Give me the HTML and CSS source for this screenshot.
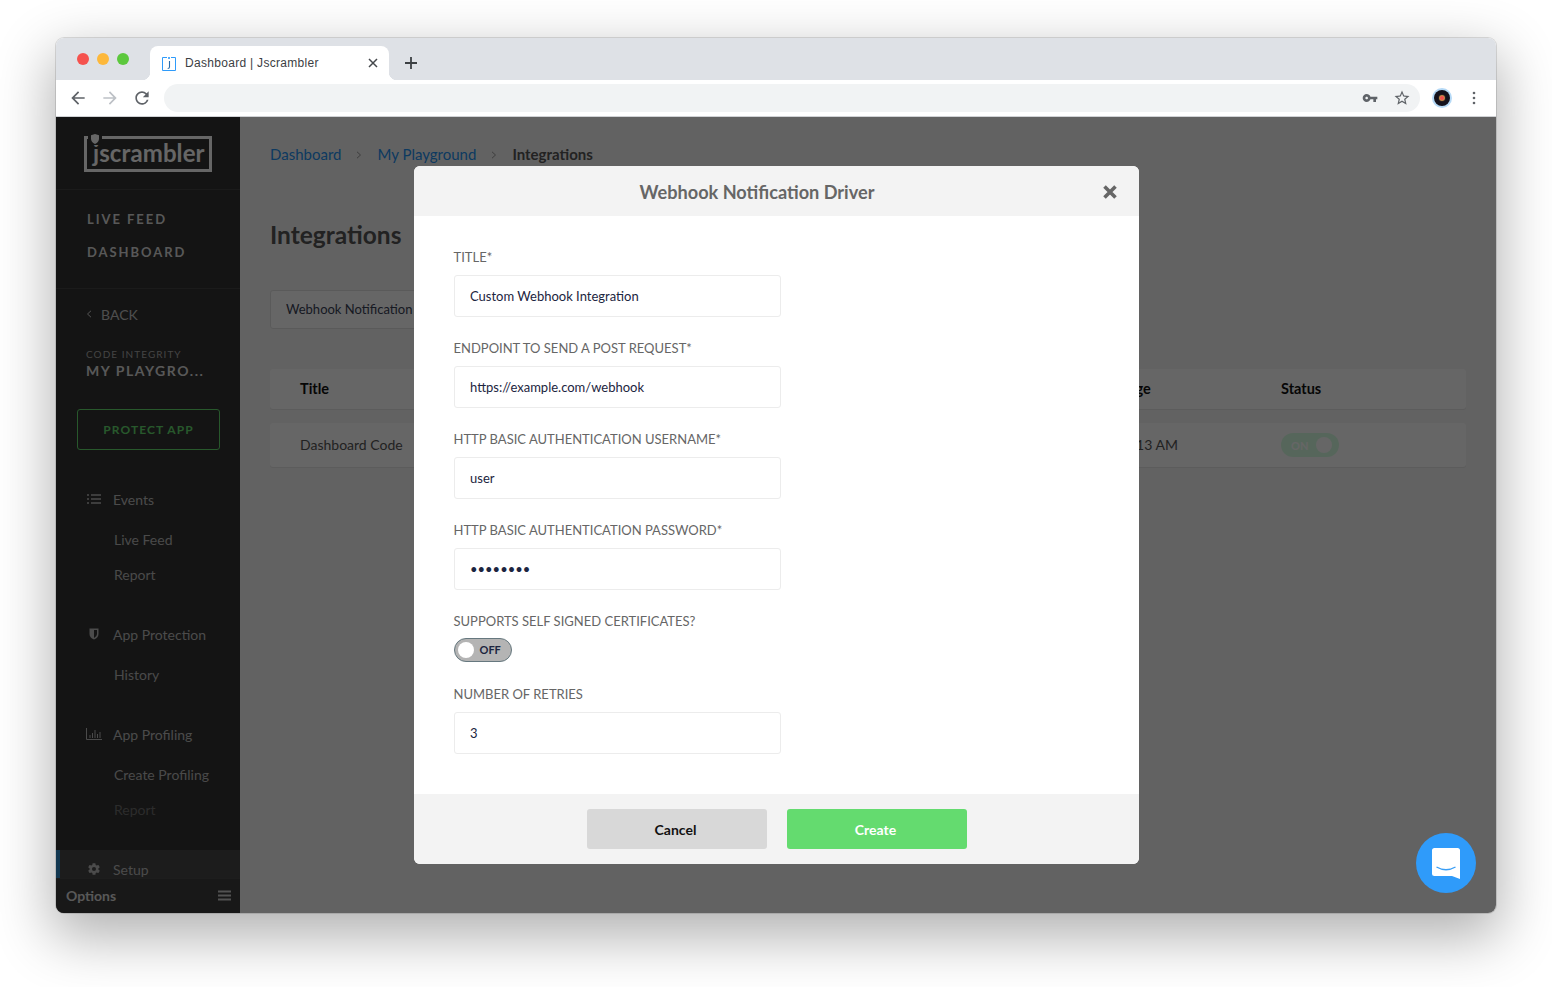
FILE: index.html
```html
<!DOCTYPE html>
<html lang="en">
<head>
<meta charset="utf-8">
<title>Dashboard | Jscrambler</title>
<link rel="stylesheet" href="styles.css">
</head>
<body>
<div class="window">
  <div class="tabstrip">
    <div class="lights"><span class="light red"></span><span class="light yellow"></span><span class="light green"></span></div>
    <div class="tab">
      <svg class="favicon" width="14" height="15" viewBox="0 0 14 15"><path d="M5 1.500H.5v13h13v-13H9" fill="none" stroke="#2f9bfa" stroke-width="1"/><circle cx="7" cy="2" r="1.100" fill="#2f9bfa"/><path d="M7.500 5v6q0 1.500-1.800 1.500" fill="none" stroke="#2b6ca8" stroke-width="1.100"/></svg>
      <span class="tab-title">Dashboard | Jscrambler</span>
      <svg class="tab-close" width="10" height="10" viewBox="0 0 10 10"><path d="M1 1l8 8M9 1l-8 8" stroke="#45484c" stroke-width="1.500"/></svg>
    </div>
    <svg class="newtab" width="14" height="14" viewBox="0 0 14 14"><path d="M7 1v12M1 7h12" stroke="#3c4043" stroke-width="1.800"/></svg>
  </div>
  <div class="toolbar">
    <svg class="tool" width="20" height="20" viewBox="0 0 24 24"><path fill="#5f6368" d="M20 11H7.830l5.590-5.590L12 4l-8 8 8 8 1.410-1.410L7.830 13H20v-2z"/></svg>
    <svg class="tool" width="20" height="20" viewBox="0 0 24 24"><path fill="#bdc1c6" d="M4 11h12.170l-5.590-5.590L12 4l8 8-8 8-1.410-1.410L16.170 13H4v-2z"/></svg>
    <svg class="tool" width="20" height="20" viewBox="0 0 24 24"><path fill="#5f6368" d="M17.650 6.350A7.958 7.958 0 0012 4c-4.420 0-7.990 3.580-7.990 8s3.570 8 7.990 8c3.730 0 6.840-2.550 7.730-6h-2.080A5.990 5.990 0 0112 18c-3.310 0-6-2.690-6-6s2.690-6 6-6c1.660 0 3.140.69 4.220 1.780L13 11h7V4l-2.350 2.350z"/></svg>
    <div class="omnibox">
      <svg width="16" height="16" viewBox="0 0 24 24"><path fill="#5f6368" d="M12.650 10C11.830 7.670 9.610 6 7 6c-3.310 0-6 2.690-6 6s2.690 6 6 6c2.610 0 4.830-1.670 5.650-4H17v4h4v-4h2v-4H12.650zM7 14c-1.100 0-2-.9-2-2s.9-2 2-2 2 .9 2 2-.9 2-2 2z"/></svg>
      <svg width="18" height="18" viewBox="0 0 24 24"><path fill="#5f6368" d="M22 9.240l-7.190-.62L12 2 9.190 8.630 2 9.240l5.460 4.730L5.820 21 12 17.270 18.180 21l-1.630-7.030L22 9.240zM12 15.400l-3.760 2.270 1-4.280-3.320-2.880 4.380-.38L12 6.100l1.710 4.040 4.380.38-3.320 2.880 1 4.280L12 15.400z"/></svg>
    </div>
    <div class="avatar"><span class="avatar-disc"><span class="avatar-core"></span></span></div>
    <svg class="kebab" width="4" height="14" viewBox="0 0 4 14"><circle cx="2" cy="2" r="1.300" fill="#5f6368"/><circle cx="2" cy="7" r="1.300" fill="#5f6368"/><circle cx="2" cy="12" r="1.300" fill="#5f6368"/></svg>
  </div>

  <div class="app">
    <aside class="sidebar">
      <div class="logo-area">
        <div class="logo">
          <svg class="logo-shield" width="14" height="12" viewBox="0 0 14 12"><path d="M7 1l4 1.300v3.500Q11 9 7 11 3 9 3 5.800V2.300z" fill="#fff"/></svg>
          <span class="logo-text">jscrambler</span>
        </div>
      </div>
      <div class="scroll">
        <nav class="topnav">
          <a class="topnav-item">LIVE FEED</a>
          <a class="topnav-item">DASHBOARD</a>
        </nav>
        <div class="back"><svg width="6" height="8" viewBox="0 0 6 8"><path d="M5 .8L1.500 4 5 7.200" fill="none" stroke="#d0d0d0" stroke-width="1"/></svg><span>BACK</span></div>
        <div class="app-kind">CODE INTEGRITY</div>
        <div class="app-name">MY PLAYGRO...</div>
        <a class="protect">PROTECT APP</a>
        <div class="group">
          <div class="group-head"><svg class="group-icon" width="16" height="12" viewBox="0 0 16 12"><path d="M1 2h2M5 2h10M1 6h2M5 6h10M1 10h2M5 10h10" stroke="#bbb" stroke-width="1.500"/></svg>Events</div>
          <a class="sub">Live Feed</a>
          <a class="sub">Report</a>
        </div>
        <div class="group">
          <div class="group-head"><svg class="group-icon" width="16" height="12" viewBox="0 0 16 12"><path d="M3.500 .5h9v5.500q0 3.500-4.500 5.500-4.500-2-4.500-5.500z" fill="#bbb"/><path d="M8 2v8q3-1.500 3-4V2z" fill="#323232"/></svg>App Protection</div>
          <a class="sub">History</a>
        </div>
        <div class="group">
          <div class="group-head"><svg class="group-icon" width="16" height="12" viewBox="0 0 16 12"><path d="M.5 0v11.500H16M4 10V7M6.500 10V5M9 10V2M11.500 10V6M14 10V4" fill="none" stroke="#bbb" stroke-width="1"/></svg>App Profiling</div>
          <a class="sub">Create Profiling</a>
          <a class="sub disabled">Report</a>
        </div>
        <div class="group-head setup"><svg class="group-icon" width="16" height="14" viewBox="0 0 24 24"><path fill="#bbb" d="M19.400 13c.04-.32.06-.66.06-1s-.02-.68-.06-1l2.100-1.650c.2-.15.25-.42.12-.64l-2-3.460c-.12-.22-.39-.3-.61-.22l-2.490 1c-.52-.4-1.080-.73-1.690-.98l-.38-2.650A.49.49 0 0014 2h-4c-.25 0-.46.18-.49.42l-.38 2.650c-.61.25-1.170.59-1.690.98l-2.490-1c-.23-.09-.49 0-.61.22l-2 3.460c-.13.22-.07.49.12.64L4.570 11c-.04.32-.07.65-.07 1s.03.68.07 1l-2.110 1.650c-.19.15-.25.42-.12.64l2 3.460c.12.22.39.3.61.22l2.490-1c.52.4 1.080.73 1.690.98l.38 2.650c.03.24.24.42.49.42h4c.25 0 .46-.18.49-.42l.38-2.650c.61-.25 1.170-.59 1.690-.98l2.490 1c.23.09.49 0 .61-.22l2-3.460c.12-.22.07-.49-.12-.64L19.400 13zM12 15.500a3.500 3.500 0 110-7 3.500 3.500 0 010 7z"/></svg>Setup</div>
      </div>
      <div class="options"><span>Options</span><svg width="13" height="11" viewBox="0 0 13 11"><path d="M0 1.500h13M0 5.500h13M0 9.500h13" stroke="#ccc" stroke-width="2"/></svg></div>
    </aside>

    <main class="main">
      <div class="crumbs"><a>Dashboard</a><svg width="6" height="8" viewBox="0 0 6 8"><path d="M1 .8L4.500 4 1 7.200" fill="none" stroke="#999" stroke-width="1"/></svg><a>My Playground</a><svg width="6" height="8" viewBox="0 0 6 8"><path d="M1 .8L4.500 4 1 7.200" fill="none" stroke="#999" stroke-width="1"/></svg><b>Integrations</b></div>
      <h1 class="page-title">Integrations</h1>
      <div class="select">Webhook Notification Driver</div>
      <div class="card table-row table-head"><span>Title</span><span>Last Message</span><span>Status</span></div>
      <div class="card table-row"><span>Dashboard Code</span><span class="when">June 13, 11:13 AM</span><span class="on-toggle"><i>ON</i><u></u></span></div>
    </main>

    <div class="overlay"></div>

    <section class="modal">
      <header class="modal-head">
        <h2>Webhook Notification Driver</h2>
        <svg class="modal-close" width="16" height="16" viewBox="0 0 16 16"><path d="M2.500 2.500l11 11M13.500 2.500l-11 11" stroke="#666" stroke-width="3.600"/></svg>
      </header>
      <div class="modal-body">
        <div class="field"><div class="label">TITLE*</div><div class="input">Custom Webhook Integration</div></div>
        <div class="field"><div class="label">ENDPOINT TO SEND A POST REQUEST*</div><div class="input">https://example.com/webhook</div></div>
        <div class="field"><div class="label">HTTP BASIC AUTHENTICATION USERNAME*</div><div class="input">user</div></div>
        <div class="field"><div class="label">HTTP BASIC AUTHENTICATION PASSWORD*</div><div class="input password">••••••••</div></div>
        <div class="field toggle-field"><div class="label">SUPPORTS SELF SIGNED CERTIFICATES?</div><div class="off-toggle"><u></u><i>OFF</i></div></div>
        <div class="field"><div class="label">NUMBER OF RETRIES</div><div class="input">3</div></div>
      </div>
      <footer class="modal-foot">
        <button class="btn cancel">Cancel</button>
        <button class="btn create">Create</button>
      </footer>
    </section>

    <div class="chat">
      <svg width="30" height="34" viewBox="0 0 30 34"><path d="M3.500 2h23A2.500 2.500 0 0 1 29 4.500V33l-8-3H3.500A2.500 2.500 0 0 1 1 27.500V4.500A2.500 2.500 0 0 1 3.500 2z" fill="#fff"/><path d="M5.500 21q9.500 5.500 19 0" fill="none" stroke="#3a9ef5" stroke-width="1.400"/></svg>
    </div>
  </div>
</div>
</body>
</html>
```

FILE: styles.css
```css
* { box-sizing: border-box; }
html, body { margin: 0; height: 100%; background: #fff; overflow: hidden; }
body { padding: 38px 56px 0; font-family: Lato, "Open Sans", sans-serif; }
a { display: block; }

.window {
  height: 875px; display: flex; flex-direction: column; border-radius: 8px; overflow: hidden;
  box-shadow: 0 0 0 1px rgba(0,0,0,.12), 0 20px 55px 5px rgba(0,0,0,.3);
}

/* browser chrome */
.tabstrip { height: 42px; background: #dee1e6; display: flex; align-items: flex-end; flex: none; }
.lights { display: flex; gap: 8px; padding: 0 0 15px 21px; width: 94px; }
.light { width: 12px; height: 12px; border-radius: 50%; }
.red { background: #f5524e; }
.yellow { background: #fdb83b; }
.green { background: #5cc83d; }
.tab {
  width: 239px; height: 34px; background: #fff; border-radius: 8px 8px 0 0; position: relative;
  display: flex; align-items: center; padding: 0 11px 0 12px;
}
.tab::before, .tab::after { content: ""; position: absolute; bottom: 0; width: 8px; height: 8px; }
.tab::before { left: -8px; background: radial-gradient(circle at 0 0, transparent 8px, #fff 8.500px); }
.tab::after { right: -8px; background: radial-gradient(circle at 100% 0, transparent 8px, #fff 8.500px); }
.favicon { flex: none; margin-right: 9px; }
.tab-title { font: 12px/16px "Liberation Sans", Arial, sans-serif; color: #3c4043; letter-spacing: .3px; flex: 1; white-space: nowrap; }
.tab-close { flex: none; }
.newtab { margin: 0 0 10px 15px; }
.toolbar { height: 37px; background: #fff; display: flex; align-items: center; padding: 0 0 1px 12px; gap: 12px; border-bottom: 1px solid #d0d2d5; flex: none; }
.tool { flex: none; }
.omnibox { width: 1256px; height: 28px; background: #f1f3f4; border-radius: 14px; display: flex; justify-content: flex-end; align-items: center; gap: 15px; padding-right: 9px; }
.avatar { width: 20px; height: 20px; border-radius: 50%; background: #b5d9f6; display: flex; align-items: center; justify-content: center; }
.avatar-disc { width: 16px; height: 16px; border-radius: 50%; background: #14121c; display: flex; align-items: center; justify-content: center; }
.avatar-core { width: 4px; height: 4px; border-radius: 50%; background: #f2504f; box-shadow: 0 0 1px 1px #d99a50; }
.kebab { margin-left: 8px; }

/* app */
.app { flex: 1; display: flex; position: relative; min-height: 0; background: #f5f5f5; }
.sidebar { width: 184px; background: #333; color: #c4c4c4; display: flex; flex-direction: column; flex: none; }
.logo-area { height: 73px; padding: 19px 0 0 28px; border-bottom: 1px solid #444; flex: none; }
.logo { width: 128px; height: 36px; border: 3px solid #fff; position: relative; display: flex; align-items: center; padding-left: 6px; }
.logo-shield { position: absolute; left: 1px; top: -6px; background: #333; }
.logo-text { font-size: 24px; font-weight: 700; color: #fff; line-height: 30px; margin-top: -3px; letter-spacing: .1px; white-space: nowrap; }
.scroll { flex: 1; min-height: 0; overflow: hidden; }
.topnav { padding: 13px 0 19px; border-bottom: 1px solid #444; }
.topnav-item { height: 33px; line-height: 33px; padding-left: 31px; font-size: 13px; font-weight: 700; letter-spacing: 1.950px; color: #dcdcdc; }
.back { height: 26px; margin-top: 12px; padding-left: 30px; display: flex; align-items: center; gap: 9px; font-size: 14px; color: #c4c4c4; }
.app-kind { margin-top: 21px; padding-left: 30px; font-size: 10px; line-height: 12px; letter-spacing: 1.050px; color: #aaa; }
.app-name { margin-top: 2px; padding-left: 30px; font-size: 14px; line-height: 18px; font-weight: 700; letter-spacing: 1.550px; color: #ddd; }
.protect { width: 143px; height: 41px; margin: 29px 0 30px 21px; border: 1px solid #64db6f; border-radius: 3px; text-align: center; line-height: 39px; font-size: 12px; font-weight: 700; letter-spacing: 1.050px; color: #64db6f; }
.group { padding-bottom: 22.500px; }
.group-head { height: 40px; margin-bottom: 2.500px; padding-bottom: 2px; display: flex; align-items: center; padding-left: 30px; font-size: 14px; color: #bbb; }
.group-icon { width: 16px; margin-right: 11px; flex: none; }
.sub { height: 35px; line-height: 33px; padding-left: 58px; font-size: 14px; color: #b8b8b8; }
.sub.disabled { color: #6e6e6e; }
.setup { background: #484848; border-left: 4px solid #2e8ac8; padding-left: 26px; margin: 0; color: #bbb; }
.options { height: 35px; flex: none; background: #3c3c3c; border-top: 1px solid #4a4a4a; padding: 0 9px 2px 10px; display: flex; align-items: center; justify-content: space-between; font-size: 14px; font-weight: 700; color: #ddd; }

.main { flex: 1; padding: 27px 30px 0; min-width: 0; }
.crumbs { height: 20px; display: flex; align-items: center; font-size: 15px; line-height: 20px; }
.crumbs a { color: #2491f0; }
.crumbs svg { margin: 1px 15px 0 15px; }
.crumbs b { color: #555; }
.page-title { margin: 55px 0 0; font-size: 24.500px; line-height: 32px; font-weight: 700; color: #555; }
.select { width: 400px; height: 39px; margin-top: 39px; background: #fff; border: 1px solid #e2e2e2; border-radius: 3px; padding-left: 15px; font-size: 13px; line-height: 36px; color: #3a4256; white-space: nowrap; }
.card { background: #fff; border-radius: 3px; box-shadow: 0 1px 1px rgba(0,0,0,.07); }
.table-row { display: grid; grid-template-columns: 1fr 217px 185px; align-items: center; padding: 0 0 2px 30px; height: 44px; margin-top: 14px; font-size: 14px; color: #555; }
.table-head { height: 40px; margin-top: 40px; font-weight: 700; font-size: 14.500px; color: #111; }
.when { margin-left: -3px; white-space: nowrap; }
.on-toggle { width: 58px; height: 24px; margin-top: 2px; border-radius: 12px; background: #d8ffe4; display: flex; align-items: center; justify-content: space-between; padding: 0 7px 0 10px; }
.on-toggle i { font-style: normal; font-size: 11px; font-weight: 700; color: #fff; }
.on-toggle u { width: 16px; height: 16px; border-radius: 50%; background: #fff; }

.overlay { position: absolute; inset: 0; background: rgba(0,0,0,.6); }

/* modal */
.modal { position: absolute; left: 357.500px; top: 49px; width: 725px; height: 697.500px; background: #fff; border-radius: 6px; overflow: hidden; display: flex; flex-direction: column; }
.modal-head { height: 50px; background: #f3f3f3; display: flex; align-items: center; justify-content: center; padding: 2px 38px 0 0; position: relative; flex: none; }
.modal-head h2 { margin: 0; font-size: 18.150px; font-weight: 700; color: #666; }
.modal-close { position: absolute; right: 20.500px; top: 18px; }
.modal-body { flex: 1; padding: 32px 40px 0; }
.field { margin-bottom: 22px; }
.toggle-field { margin-bottom: 23px; }
.label { height: 18px; font-size: 13px; line-height: 18px; color: #666; margin-bottom: 9px; white-space: nowrap; }
.input { width: 327px; height: 42px; border: 1px solid #ececec; border-radius: 3px; padding-left: 15.500px; font-size: 13px; line-height: 41px; color: #1c2540; }
.password { line-height: 41px; }
.off-toggle { width: 58px; height: 24px; border-radius: 12px; background: #b4b4b4; border: 1px solid #66787f; display: flex; align-items: center; padding-left: 3px; margin-top: -1px; }
.off-toggle u { width: 16px; height: 16px; border-radius: 50%; background: #fff; flex: none; }
.off-toggle i { font-style: normal; font-size: 11px; line-height: 13px; margin: -2px 0 0 6px; font-weight: 700; color: #1c2540; }
.modal-foot { height: 69.500px; background: #f3f3f3; display: flex; justify-content: center; gap: 20px; padding: 15px 0 0 1px; flex: none; }
.btn { width: 180px; height: 40px; border: 0; border-radius: 3px; padding: 0 2px 0 0; font-family: Lato, sans-serif; font-size: 14px; font-weight: 700; }
.cancel { background: #d8d8d8; color: #111; }
.create { background: #64db6f; color: #fff; }

.chat { position: absolute; right: 20px; bottom: 20px; width: 60px; height: 60px; border-radius: 50%; background: #2f9bfa; display: flex; align-items: center; justify-content: center; }
```
